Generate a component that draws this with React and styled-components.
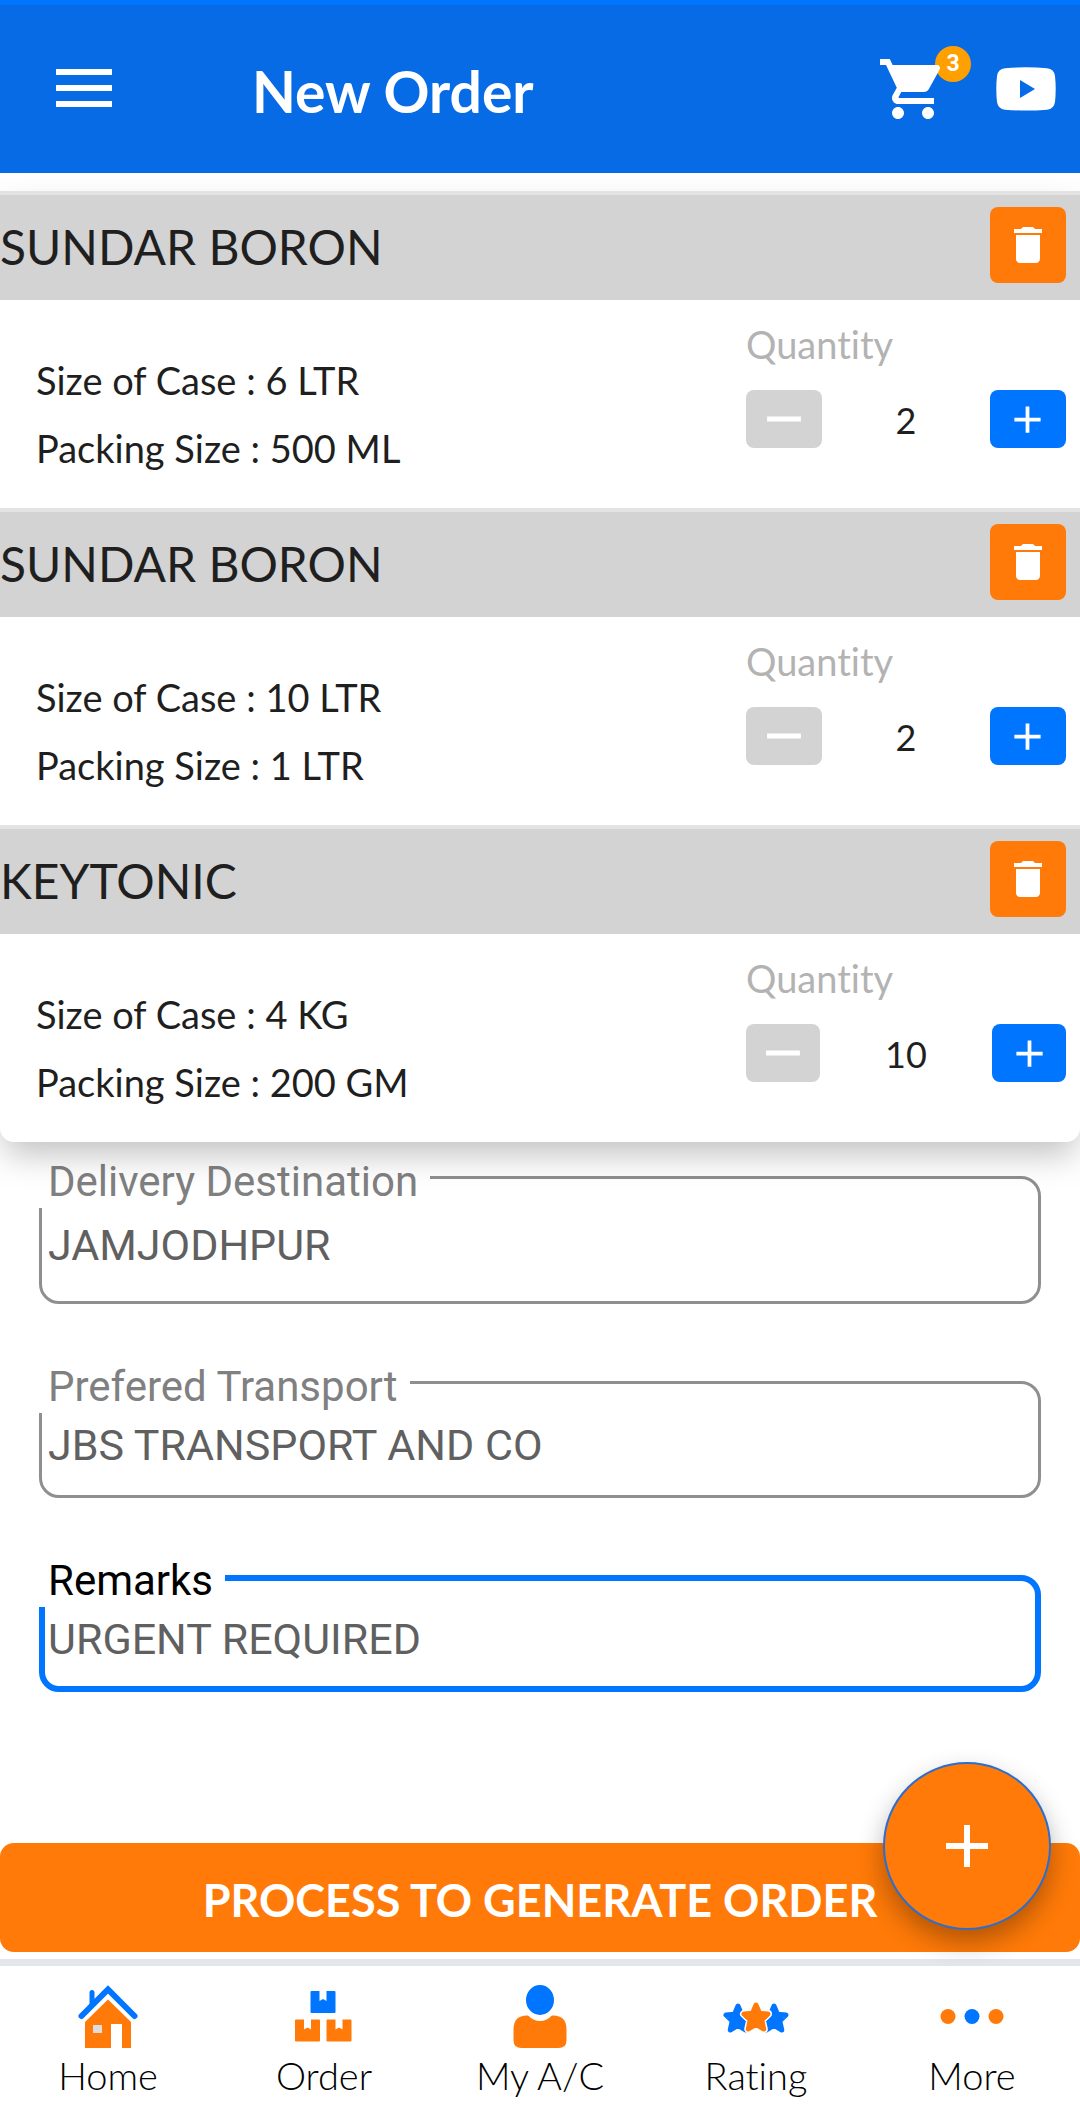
import React, {useState} from 'react'
import styled, {createGlobalStyle} from "styled-components";
import {MdAdd, MdDelete, MdRemove, MdShoppingCart} from "react-icons/md";

const GlobalStyle = createGlobalStyle`
  :root {
    --clr-primary: #0075ff;
    --clr-header: #066be5;
    --clr-accent: #ff7a08;
    --clr-muted: #d3d3d3;
    --clr-text: #1f1f1f;
  }

  * {
    box-sizing: border-box;
  }

  body {
    margin: 0;
    background: white;
    color: var(--clr-text);
    font-family: Lato, "Open Sans", sans-serif;
    font-variant-ligatures: none;
  }

  button, input {
    font: inherit;
    color: inherit;
  }

  button {
    border: none;
    padding: 0;
    cursor: pointer;
  }
`

const Page = styled.div`
  display: flex;
  flex-direction: column;
  min-height: 100vh;
`

const Header = styled.header`
  display: flex;
  align-items: center;
  height: 173px;
  padding: 0 24px 0 56px;
  border-top: 5px solid var(--clr-primary);
  background: var(--clr-header);
  color: white;
`

const Title = styled.h1`
  flex: 1;
  margin: 0 0 0 140px;
  padding-top: 4px;
  font-size: 57px;
  line-height: 64px;
  font-weight: 700;
`

const HeaderButton = styled.button`
  position: relative;
  display: flex;
  background: none;
  color: white;
`

const CartButton = styled(HeaderButton)`
  margin-right: 47px;

  svg {
    position: relative;
  }
`

const Badge = styled.span`
  position: absolute;
  top: -7px;
  left: 58px;
  width: 36px;
  height: 36px;
  border-radius: 50%;
  background: #ffa000;
  font: 700 23px/36px Roboto, sans-serif;
  text-align: center;
`

const Card = styled.ul`
  position: relative;
  z-index: 1;
  margin: 18px 0 0;
  padding: 0;
  list-style: none;
  background: white;
  border-radius: 0 0 14px 14px;
  box-shadow: 0 16px 34px -4px rgba(0, 0, 0, 0.25);
`

const Item = styled.li`
  border-top: 4px solid #e3e3e3;
`

const ItemHeader = styled.div`
  display: flex;
  align-items: center;
  justify-content: space-between;
  padding: 12px 14px 17px 0;
  background: var(--clr-muted);
`

const ItemName = styled.h2`
  margin: 0;
  padding-top: 4px;
  font-size: 48px;
  line-height: 72px;
  font-weight: 400;
`

const DeleteButton = styled.button`
  display: flex;
  align-items: center;
  justify-content: center;
  width: 76px;
  height: 76px;
  border-radius: 8px;
  background: var(--clr-accent);
  color: white;
`

const ItemBody = styled.div`
  display: flex;
  justify-content: space-between;
  height: 208px;
  padding: 0 14px 0 36px;
`

const Details = styled.div`
  padding-top: 46px;
  font-size: 38px;
  line-height: 68px;
`

const Quantity = styled.div`
  width: 320px;
  padding-top: 16px;
`

const QuantityLabel = styled.div`
  font-size: 38px;
  line-height: 56px;
  color: #b3b3b3;
`

const Stepper = styled.div`
  display: flex;
  height: 58px;
  margin-top: 18px;
`

const StepButton = styled.button`
  display: flex;
  flex: 1 1 52px;
  align-items: center;
  justify-content: center;
  border-radius: 8px;
  background: ${({$muted}) => $muted ? "var(--clr-muted)" : "var(--clr-primary)"};
  color: white;
`

const Count = styled.output`
  flex: 6 1 auto;
  font-size: 36px;
  line-height: 60px;
  text-align: center;
`

const Form = styled.form`
  display: flex;
  flex-direction: column;
  gap: 77px;
  padding: 34px 39px 70px;
`

const FieldBox = styled.div`
  position: relative;
  height: ${({$tall}) => $tall ? "128px" : "117px"};

  label {
    position: absolute;
    top: -20px;
    left: 0;
    padding: 0 12px 0 9px;
    background: white;
    font: 400 42px/52px Roboto, sans-serif;
    color: ${({$active}) => $active ? "black" : "#808080"};
  }

  input {
    width: 100%;
    height: 100%;
    padding: ${({$active}) => $active ? "10px 3px 0" : "10px 6px 0"};
    border: ${({$active}) => $active ? "6px solid var(--clr-primary)" : "3px solid #8f8f8f"};
    border-radius: 20px;
    outline: none;
    background: white;
    font: 400 43px/50px Roboto, sans-serif;
    color: #606060;
  }
`

const Footer = styled.footer`
  position: relative;
  margin-top: auto;
`

const ProcessButton = styled.button`
  display: block;
  width: 100%;
  height: 109px;
  padding-top: 4px;
  border-radius: 14px;
  background: var(--clr-accent);
  color: white;
  font-size: 45px;
  line-height: 52px;
  font-weight: 700;
`

const FloatingButton = styled.button`
  position: absolute;
  top: -81px;
  right: 29px;
  display: flex;
  align-items: center;
  justify-content: center;
  width: 168px;
  height: 168px;
  border: 2px solid #2a6fd0;
  border-radius: 50%;
  background: var(--clr-accent);
  color: white;
  box-shadow: 0 12px 26px rgba(0, 0, 0, 0.3);
`

const Nav = styled.nav`
  display: flex;
  height: 160px;
  margin-top: 7px;
  border-top: 7px solid #e4e6ee;
`

const NavLink = styled.a`
  display: flex;
  flex: 1;
  flex-direction: column;
  align-items: center;
  gap: 2px;
  padding-top: 19px;
  color: black;
  font-size: 38px;
  line-height: 48px;
  font-weight: 300;
  text-decoration: none;
`

const MenuIcon = () => (
    <svg width="56" height="40" fill="currentColor">
        <path d="M0 0h56v6H0zM0 16h56v6H0zM0 32h56v6H0z"/>
    </svg>
)

const VideoIcon = () => (
    <svg width="60" height="44" fill="currentColor">
        <path fillRule="evenodd" d="M9 1.3Q30-.6 51 1.3Q58 2 59 9Q60.4 22 59 35Q58 42 51 42.7Q30 44.4 9 42.7Q2 42 1 35Q-.4 22 1 9Q2 2 9 1.3ZM24 13v18l15-9z"/>
    </svg>
)

const HomeIcon = () => (
    <svg width="64" height="64">
        <path d="M16 7.5v12" stroke="#0075ff" strokeWidth="5" strokeLinecap="round"/>
        <path d="M5.5 31L32 4.5L58.5 31" fill="none" stroke="#0075ff" strokeWidth="6" strokeLinecap="round"/>
        <path d="M32 14.5L55 37v26h-9V39H35v24H9V37z" fill="#ff7a08"/>
        <path d="M17 40h9v8h-9z" fill="#dddddd"/>
    </svg>
)

const Box = ({x, y, color}) => (
    <path
        transform={`translate(${x} ${y})`}
        d="M1 0h8v10l3.5-2L16 10V0h8q1 0 1 1v20q0 1-1 1H1q-1 0-1-1V1q0-1 1-1z"
        fill={color}
    />
)

const OrderIcon = () => (
    <svg width="64" height="64">
        <Box x={18.5} y={6} color="#0075ff"/>
        <Box x={3} y={34.5} color="#ff7a08"/>
        <Box x={34.5} y={34.5} color="#ff7a08"/>
    </svg>
)

const AccountIcon = () => (
    <svg width="64" height="64">
        <path d="M19 30.5h26q13.5 0 13.5 14V55q0 8-8 8h-37q-8 0-8-8V44.5q0-14 13.5-14z" fill="#ff7a08"/>
        <ellipse cx="32" cy="16" rx="17" ry="20" fill="white"/>
        <ellipse cx="32" cy="15" rx="14" ry="15" fill="#0075ff"/>
    </svg>
)

const STAR = "M0-13L3.5-4.7L12-4L5.8 2L7.8 11L0 6.4L-7.8 11L-5.8 2L-12-4L-3.5-4.7Z"

const RatingIcon = () => (
    <svg width="66" height="64" strokeLinejoin="round">
        <g fill="#0075ff" stroke="#0075ff" strokeWidth="5">
            <path d={STAR} transform="translate(15 34)"/>
            <path d={STAR} transform="translate(51 34)"/>
        </g>
        <path d={STAR} transform="translate(33 33)" fill="white" stroke="white" strokeWidth="8"/>
        <path d={STAR} transform="translate(33 33)" fill="#ff7a08" stroke="#ff7a08" strokeWidth="5"/>
    </svg>
)

const MoreIcon = () => (
    <svg width="64" height="64">
        <circle cx="8" cy="31.5" r="7.5" fill="#ff7a08"/>
        <circle cx="32" cy="31.5" r="7.5" fill="#0075ff"/>
        <circle cx="56" cy="31.5" r="7.5" fill="#ff7a08"/>
    </svg>
)

const initialItems = [
    {id: 1, name: "SUNDAR BORON", caseSize: "6 LTR", packing: "500 ML", count: 2},
    {id: 2, name: "SUNDAR BORON", caseSize: "10 LTR", packing: "1 LTR", count: 2},
    {id: 3, name: "KEYTONIC", caseSize: "4 KG", packing: "200 GM", count: 10},
]

const tabs = [
    {label: "Home", icon: <HomeIcon/>},
    {label: "Order", icon: <OrderIcon/>},
    {label: "My A/C", icon: <AccountIcon/>},
    {label: "Rating", icon: <RatingIcon/>},
    {label: "More", icon: <MoreIcon/>},
]

const OrderItem = ({item, onChange, onDelete}) => (
    <Item>
        <ItemHeader>
            <ItemName>{item.name}</ItemName>
            <DeleteButton aria-label="Delete" onClick={onDelete}>
                <MdDelete size={48}/>
            </DeleteButton>
        </ItemHeader>
        <ItemBody>
            <Details>
                <div>Size of Case : {item.caseSize}</div>
                <div>Packing Size : {item.packing}</div>
            </Details>
            <Quantity>
                <QuantityLabel>Quantity</QuantityLabel>
                <Stepper>
                    <StepButton $muted aria-label="Decrease" onClick={() => onChange(Math.max(1, item.count - 1))}>
                        <MdRemove size={58}/>
                    </StepButton>
                    <Count>{item.count}</Count>
                    <StepButton aria-label="Increase" onClick={() => onChange(item.count + 1)}>
                        <MdAdd size={45}/>
                    </StepButton>
                </Stepper>
            </Quantity>
        </ItemBody>
    </Item>
)

const Field = ({id, label, value, tall, active}) => (
    <FieldBox $tall={tall} $active={active}>
        <input id={id} defaultValue={value}/>
        <label htmlFor={id}>{label}</label>
    </FieldBox>
)

const App = () => {

    const [items, setItems] = useState(initialItems)

    const changeCount = (id, count) => {
        setItems(items.map(item => item.id === id ? {...item, count} : item))
    }

    return (
        <Page>
            <GlobalStyle/>
            <Header>
                <HeaderButton aria-label="Menu"><MenuIcon/></HeaderButton>
                <Title>New Order</Title>
                <CartButton aria-label="Cart">
                    <Badge>{items.length}</Badge>
                    <MdShoppingCart size={72}/>
                </CartButton>
                <HeaderButton aria-label="Videos"><VideoIcon/></HeaderButton>
            </Header>
            <Card>
                {items.map(item => (
                    <OrderItem
                        key={item.id}
                        item={item}
                        onChange={count => changeCount(item.id, count)}
                        onDelete={() => setItems(items.filter(i => i.id !== item.id))}
                    />
                ))}
            </Card>
            <Form>
                <Field id="destination" label="Delivery Destination" value="JAMJODHPUR" tall/>
                <Field id="transport" label="Prefered Transport" value="JBS TRANSPORT AND CO"/>
                <Field id="remarks" label="Remarks" value="URGENT REQUIRED" active/>
            </Form>
            <Footer>
                <ProcessButton>PROCESS TO GENERATE ORDER</ProcessButton>
                <FloatingButton aria-label="Add product"><MdAdd size={72}/></FloatingButton>
                <Nav>
                    {tabs.map(tab => (
                        <NavLink key={tab.label} href="#">
                            {tab.icon}
                            {tab.label}
                        </NavLink>
                    ))}
                </Nav>
            </Footer>
        </Page>
    )

}

export default App
